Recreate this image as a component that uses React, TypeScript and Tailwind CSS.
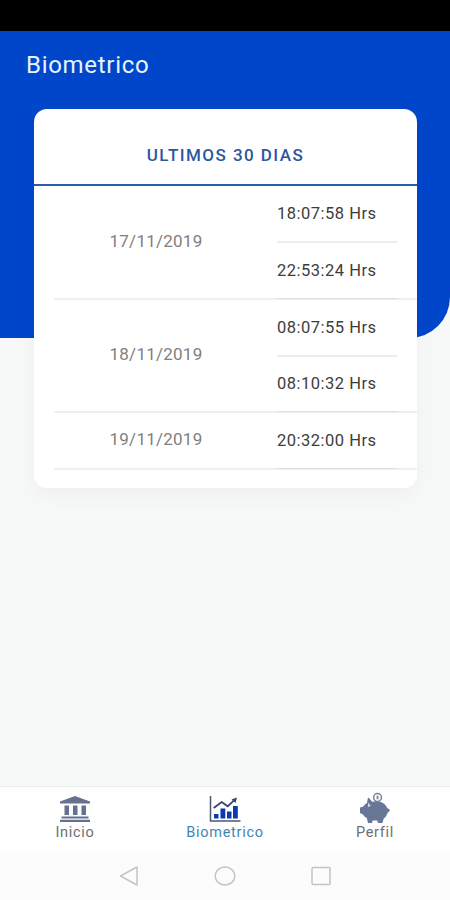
import clsx from "clsx";

interface DayRecord {
  date: string;
  times: string[];
}

const records: DayRecord[] = [
  { date: "17/11/2019", times: ["18:07:58 Hrs", "22:53:24 Hrs"] },
  { date: "18/11/2019", times: ["08:07:55 Hrs", "08:10:32 Hrs"] },
  { date: "19/11/2019", times: ["20:32:00 Hrs"] },
];

function BankIcon() {
  return (
    <svg width="32" height="27" viewBox="0 0 32 27" fill="#65718f">
      <path d="M16 0 31 5.5V7.500H1V5.500Z" />
      <path d="M5.500 9.500h4.500v9.500H5.500zM14 9.500h4.500v9.500H14zM22.500 9.500H27v9.500h-4.500z" />
      <path d="M2.500 20.500h27v2h-27zM1 23.800h30v2.200H1z" />
    </svg>
  );
}

function ChartIcon() {
  return (
    <svg width="32" height="27" viewBox="0 0 32 27" fill="none">
      <path d="M1.500 0v25H31.500" stroke="#4a5878" strokeWidth="1.500" />
      <path
        d="M5 18h4.500v4.500H5zM11.500 12.500h4.800v10h-4.800zM18 15.500h4.500v7H18zM24 10h4.800v12.500H24z"
        fill="#0b39b0"
      />
      <path d="m4.700 12 8-6 6 4.300 7.300-7" stroke="#34446e" strokeWidth="1.800" />
      <path d="m22.500 3.500 5.500-2-1.500 5.500Z" fill="#34446e" />
    </svg>
  );
}

function PiggyIcon() {
  return (
    <svg width="32" height="31" viewBox="0 -1.500 32 31">
      <path
        d="M9 4c1.500.7 2.800 2.800 4 4.300 3-.8 7-.8 10 .7 2.500 1.200 4.200 3.200 5.200 5.500l3 2-3 3.500c-.8 2.500-2 4-3.700 5.500l-1 4H19l-.8-2.500h-4.500l-.7 2.500H9l-1.200-5C5.800 23.500 4.800 22.500 4 21l-3-1.500V14l3.300-1C5.200 11.500 6.500 10.500 8 9.500Z"
        fill="#687798"
      />
      <path d="m9.300 9 2.500 3.500-3 1Z" fill="#d4dae5" />
      <circle cx="18.500" cy="4" r="3.900" fill="#fff" stroke="#77829b" strokeWidth="1.500" />
      <path d="M18.500 2.200v3.600" stroke="#77829b" strokeWidth="1.800" />
    </svg>
  );
}

const tabs = [
  { label: "Inicio", icon: <BankIcon />, active: false },
  { label: "Biometrico", icon: <ChartIcon />, active: true },
  { label: "Perfil", icon: <PiggyIcon />, active: false },
];

function RecordRow({ record }: { record: DayRecord }) {
  return (
    <div className="ml-5 flex border-b-2 border-[#efefef]">
      <div className="flex w-[204px] items-center justify-center pb-px text-[17px] tracking-[0.25px] text-[#808080]">
        {record.date}
      </div>
      <div className="ml-[19px] w-[120px]">
        {record.times.map((time, i) => (
          <div
            key={time}
            className={clsx(
              "flex items-center pt-[2px] text-[16.5px] tracking-[0.5px] text-[#3d3d3d]",
              i < record.times.length - 1
                ? "h-[57px] border-b-2 border-[#ededed]"
                : "-mb-px h-[55.5px] border-b border-[#dedede]",
            )}
          >
            {time}
          </div>
        ))}
      </div>
    </div>
  );
}

export default function App() {
  return (
    <div className="flex h-[900px] w-[450px] flex-col overflow-hidden bg-[#f7f9f9] font-[Roboto,sans-serif]">
      {/* Status bar */}
      <div className="h-[31px] shrink-0 bg-black" />

      <main className="grid flex-1 grid-cols-1 content-start">
        <div className="col-start-1 row-start-1 h-[307px] rounded-br-[41px] bg-[#0046cb]" />

        <div className="col-start-1 row-start-1">
          <h1 className="h-[78px] pt-[17px] pl-[26px] text-[24px] leading-[34px] tracking-[0.7px] text-[#e5f4ff]">
            Biometrico
          </h1>

          <section className="ml-[34px] h-[379px] w-[383px] overflow-hidden rounded-[13px] bg-white shadow-[0_8px_24px_rgba(0,0,0,0.04)]">
            <h2 className="flex h-[77px] items-center justify-center border-b-2 border-[#2a5caa] pt-[18px] text-[17px] font-medium tracking-[1.45px] text-[#2b579e]">
              ULTIMOS 30 DIAS
            </h2>
            {records.map((record) => (
              <RecordRow key={record.date} record={record} />
            ))}
          </section>
        </div>
      </main>

      {/* Bottom tabs */}
      <nav className="grid h-[67px] shrink-0 grid-cols-3 border-t border-[#ebefef] bg-white">
        {tabs.map((tab) => (
          <div key={tab.label} className="flex flex-col items-center">
            <div className="flex h-[38px] items-end justify-center pb-[2px]">{tab.icon}</div>
            <span
              className={clsx(
                "text-[14.5px] leading-[16px] tracking-[0.7px]",
                tab.active ? "text-[#3f86b3]" : "text-[#6e6e6e]",
              )}
            >
              {tab.label}
            </span>
          </div>
        ))}
      </nav>

      {/* System buttons */}
      <div className="flex h-[47px] shrink-0 items-center justify-center gap-[75px] bg-[#fcfcfc] pb-[2px]">
        <svg width="20" height="20" viewBox="0 0 20 20" fill="none" stroke="#c4c4c4" strokeWidth="1.5">
          <path d="M18 1v18L1.500 10Z" strokeLinejoin="round" />
        </svg>
        <svg width="22" height="20" viewBox="0 0 22 20" fill="none" stroke="#c4c4c4" strokeWidth="1.5">
          <ellipse cx="11" cy="10" rx="9.8" ry="9" />
        </svg>
        <svg width="20" height="20" viewBox="0 0 20 20" fill="none" stroke="#c4c4c4" strokeWidth="1.5">
          <rect x="1" y="1.5" width="18" height="17" rx="1" />
        </svg>
      </div>
    </div>
  );
}
